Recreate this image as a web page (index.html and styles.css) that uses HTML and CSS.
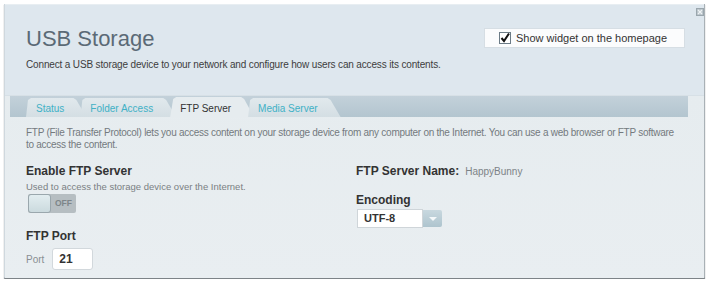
FILE: index.html
```html
<!DOCTYPE html>
<html>
<head>
<meta charset="utf-8">
<link rel="stylesheet" href="styles.css">
</head>
<body>
<div class="panel">
  <div class="header">
    <span class="close" aria-label="close">
      <svg width="8" height="8" viewBox="0 0 8 8"><rect x="0.5" y="0.5" width="7" height="7" fill="#b9c3c9" stroke="#9aa6ad"/><path d="M2 2 L6 6 M6 2 L2 6" stroke="#eef2f4" stroke-width="1.2"/></svg>
    </span>
    <div class="head-top">
      <h1 class="title">USB Storage</h1>
      <label class="widget">
        <span class="check">
          <svg width="12" height="12" viewBox="0 0 12 12"><rect x="0.5" y="0.5" width="11" height="11" fill="#fff" stroke="#6b7b86"/><path d="M2.5 6 L5 9 L10 1.5" fill="none" stroke="#111" stroke-width="2"/></svg>
        </span>
        <span>Show widget on the homepage</span>
      </label>
    </div>
    <p class="subtitle">Connect a USB storage device to your network and configure how users can access its contents.</p>
  </div>
  <div class="content">
    <div class="tabbar">
      <div class="tab">Status</div>
      <div class="tab">Folder Access</div>
      <div class="tab active">FTP Server</div>
      <div class="tab">Media Server</div>
    </div>
    <p class="desc">FTP (File Transfer Protocol) lets you access content on your storage device from any computer on the Internet. You can use a web browser or FTP software to access the content.</p>
    <div class="cols">
      <div class="col left">
        <h2 class="label">Enable FTP Server</h2>
        <p class="hint">Used to access the storage device over the Internet.</p>
        <div class="toggle"><span class="knob"></span><span class="off">OFF</span></div>
        <h2 class="label port-label">FTP Port</h2>
        <div class="port-row"><span class="small">Port</span><span class="input">21</span></div>
      </div>
      <div class="col right">
        <div class="name-row"><h2 class="label">FTP Server Name:</h2><span class="name">HappyBunny</span></div>
        <h2 class="label enc-label">Encoding</h2>
        <div class="select"><span class="sel-val">UTF-8</span><span class="sel-btn"><svg width="10" height="6" viewBox="0 0 10 6"><path d="M1 1 L9 1 L5 5 Z" fill="#f4f8fa"/></svg></span></div>
      </div>
    </div>
  </div>
</div>
</body>
</html>
```
FILE: styles.css
```css
* { box-sizing: border-box; }
html, body { margin: 0; padding: 0; background: #ffffff; }
body { font-family: "Liberation Sans", Arial, sans-serif; color: #333; }
.panel {
  margin: 4px 4px 0 4px;
  width: 701px;
  border-left: 1px solid #cfd8de;
  border-right: 1px solid #a9b1b6;
  border-bottom: 2px solid #7d8387;
  box-shadow: 0 1px 1px rgba(0,0,0,0.35);
  height: 275px;
  position: relative;
  background: #e7ecef;
}
.header {
  background: #dee7ee;
  height: 91px;
  padding: 20px 0 0 21px;
  border-top: 1px solid #e8eef2;
}
.close { position: absolute; right: 0; top: 4px; line-height: 0; }
.head-top { display: flex; justify-content: space-between; align-items: flex-start; }
.title {
  margin: 0;
  font-weight: normal;
  font-size: 22px;
  color: #5b6a76;
  line-height: 26px;
  padding-top: 1px;
}
.widget {
  margin-right: 19px;
  margin-top: 3px;
  width: 201px;
  height: 20px;
  background: #fbfcfd;
  border: 1px solid #d6dee4;
  display: flex;
  align-items: center;
  padding-left: 14px;
  font-size: 11px;
  color: #333;
  gap: 5px;
}
.check { line-height: 0; }
.subtitle {
  margin: 7px 0 0 0;
  font-size: 10px;
  letter-spacing: -0.15px;
  color: #3d3d3d;
}
.content {
  background: linear-gradient(#e6ecef, #e9eef1);
  height: 183px;
  padding-top: 0;
  border-top: 1px solid #d7e0e6;
}
.tabbar {
  margin: 0 0 0 5px;
  width: 678px;
  height: 21px;
  background: linear-gradient(#c3d1da, #b3c5cf);
  display: flex;
  align-items: flex-end;
  padding-left: 16px;
}
.tab {
  height: 19px;
  font-size: 10px;
  color: #41b1c6;
  background: linear-gradient(#e1e9ed, #d4dee3);
  clip-path: polygon(0 100%, 2px 2px, 5px 0, calc(100% - 13px) 0, calc(100% - 10px) 2px, 100% 100%);
  padding: 5px 23px 0 10px;
  margin-right: -6px;
}
.tab:first-child { padding-right: 22px; }
.tab.active {
  background: #e6ecef;
  color: #333;
  height: 20px;
  padding-top: 6px;
  clip-path: polygon(0 100%, 3px 2px, 6px 0, calc(100% - 13px) 0, calc(100% - 10px) 2px, 100% 100%);
}
.desc {
  margin: 10px 24px 0 21px;
  font-size: 10px;
  letter-spacing: -0.27px;
  line-height: 12px;
  color: #747a7e;
}
.cols { display: flex; margin-top: 13px; padding-left: 21px; }
.col.left { width: 330px; }
.label {
  margin: 0;
  font-size: 12px;
  font-weight: bold;
  color: #333;
  line-height: 14px;
}
.hint { margin: 3px 0 0 0; font-size: 9.5px; color: #7a7f83; }
.toggle {
  margin: 2px 0 0 2px;
  width: 48px;
  height: 19px;
  display: flex;
  background: #b6bec2;
  border-radius: 2px;
}
.knob {
  width: 23px;
  height: 19px;
  background: linear-gradient(#e2edf0, #cbdade);
  border: 1px solid #9aa7ad;
  border-radius: 3px;
}
.off {
  flex: 1;
  font-size: 8.5px;
  font-weight: bold;
  color: #7d8589;
  text-align: center;
  line-height: 19px;
}
.port-label { margin-top: 16px; }
.port-row { display: flex; align-items: center; margin-top: 5px; gap: 8px; }
.small { font-size: 10px; color: #8a8f93; }
.input {
  width: 41px;
  height: 22px;
  background: #fff;
  border: 1px solid #d2d8dc;
  border-radius: 3px;
  font-size: 12px;
  font-weight: bold;
  line-height: 20px;
  padding-left: 6px;
}
.name-row { display: flex; align-items: baseline; gap: 6px; }
.name { font-size: 10px; color: #7d8387; }
.enc-label { margin-top: 15px; }
.select { display: flex; margin-top: 2px; margin-left: 1px; }
.sel-val {
  width: 66px;
  height: 19px;
  background: #fff;
  border: 1px solid #cfd5d9;
  font-size: 11px;
  font-weight: bold;
  padding-left: 6px;
  line-height: 17px;
}
.sel-btn {
  width: 19px;
  height: 17px;
  margin-top: 1px;
  background: linear-gradient(#c8d8df, #aec4ce);
  display: flex;
  align-items: center;
  justify-content: center;
  border-radius: 0 2px 2px 0;
}
```
